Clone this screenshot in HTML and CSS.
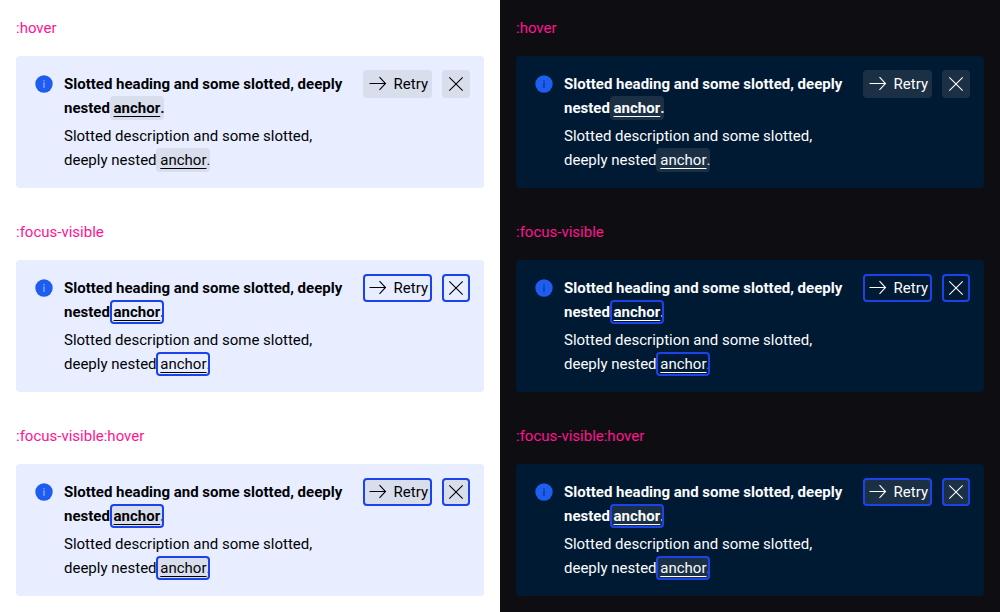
FILE: index.html
```
<!DOCTYPE html>
<html lang="en">
<head>
<meta charset="utf-8">
<title>Inline notification states</title>
<link rel="stylesheet" href="styles.css">
</head>
<body>
<svg class="sprite" aria-hidden="true">
  <symbol id="info" viewBox="0 0 24 24"><circle class="disc" cx="12" cy="12" r="8.700"/><path class="mark" d="M11.400 8h1.200v1.200h-1.200zM11.400 10.200h1.200V16h-1.200z"/></symbol>
  <symbol id="arrow" viewBox="0 0 24 24"><path class="stroke" d="M4.500 11.500h16M14.500 5.200l6 6.300-6 6.300"/></symbol>
  <symbol id="close" viewBox="0 0 24 24"><path class="stroke" d="M5.300 5.300l13.400 13.400M18.700 5.300l-13.400 13.400"/></symbol>
</svg>
<main class="page" id="page"></main>
<template id="sample">
  <section class="sample">
    <p class="label"></p>
    <article class="banner">
      <svg class="icon"><use href="#info"/></svg>
      <div class="content">
        <h2 class="heading">Slotted heading and some slotted, deeply nested <a class="anchor" href="#">anchor</a>.</h2>
        <p class="description">Slotted description and some slotted, deeply nested <a class="anchor" href="#">anchor</a>.</p>
      </div>
      <div class="actions">
        <button class="button retry" type="button"><svg class="icon"><use href="#arrow"/></svg><span>Retry</span></button>
        <button class="button close" type="button" aria-label="Close"><svg class="icon"><use href="#close"/></svg></button>
      </div>
    </article>
  </section>
</template>
<script src="main.js"></script>
</body>
</html>
```
FILE: styles.css
```
* { box-sizing: border-box; }
body { margin: 0; font: 15px/24px Roboto, "Liberation Sans", sans-serif; }
.sprite { position: absolute; width: 0; height: 0; }
.page { display: grid; grid-template-columns: 1fr 1fr; min-height: 100vh; }
.theme { background: var(--page); color: var(--text); }
.light { --page: #fff; --text: #010205; --surface: #e8eeff; --hover: rgba(148, 149, 152, .18); --label: #ff1493; }
.dark { --page: #0e0e12; --text: #fbfcff; --surface: #001a33; --hover: rgba(148, 149, 152, .18); --label: #ff1493; }
.sample { display: flex; flex-direction: column; gap: 16px; padding: 16px; }
.label { margin: 0; color: var(--label); }
.banner { display: flex; align-items: flex-start; gap: 8px; padding: 16px; border-radius: 4px; background: var(--surface); }
.icon { flex: none; width: 24px; height: 24px; }
.disc { fill: #1f5df0; }
.mark { fill: var(--surface); opacity: .6; }
.dark .mark { opacity: .8; }
.stroke { fill: none; stroke: currentColor; stroke-width: 1.1; }
.content { flex: 1; display: flex; flex-direction: column; gap: 4px; }
.heading, .description { margin: 0; font-size: 15px; font-weight: 400; }
.heading { font-weight: 700; }
.anchor { position: relative; margin: 0 -4px; padding: 3px 4px; border-radius: 4px; color: inherit; text-underline-offset: 3px; }
.actions { display: flex; gap: 10px; margin: -2px -2px 0 8px; }
.button { display: flex; align-items: center; gap: 5px; height: 28px; padding: 0 2px; border: 0; border-radius: 4px; background: none; color: inherit; font: inherit; }
.retry { padding-right: 4px; }
.hovered .anchor, .hovered .button { background: var(--hover); }
.focused .anchor, .focused .button { outline: 2px solid #1a44ea; outline-offset: -2px; }
```
FILE: main.js
```
const states = [
  [":hover", "hovered"],
  [":focus-visible", "focused"],
  [":focus-visible:hover", "focused hovered"]
];
const template = document.getElementById("sample");
for (const theme of ["light", "dark"]) {
  const column = document.createElement("div");
  column.className = "theme " + theme;
  for (const [label, classes] of states) {
    const sample = template.content.cloneNode(true);
    sample.querySelector(".label").textContent = label;
    sample.querySelector(".sample").className += " " + classes;
    column.append(sample);
  }
  document.getElementById("page").append(column);
}
```
